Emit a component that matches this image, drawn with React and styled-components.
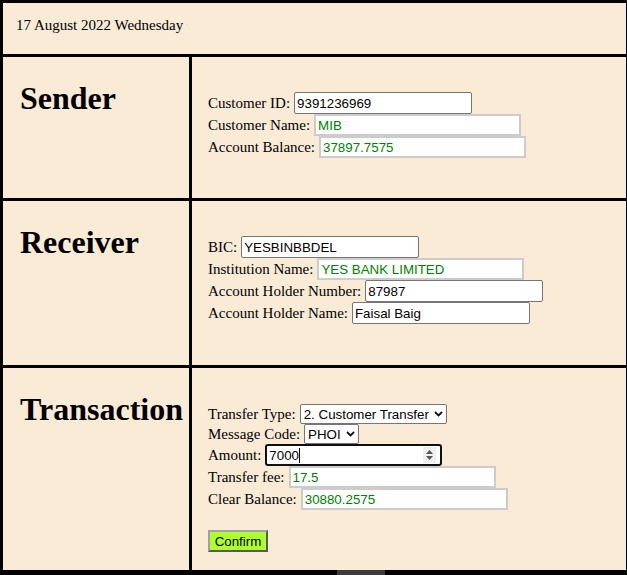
import React from "react";
import styled, { createGlobalStyle } from "styled-components";

const GlobalStyle = createGlobalStyle`
  html, body {
    margin: 0;
    padding: 0;
    background: #faebd7;
  }
  body {
    font-family: "Liberation Serif", "Times New Roman", serif;
    font-size: 15px;
    color: #000;
  }
`;

const Page = styled.div`
  width: 627px;
  background: #000;
  box-sizing: border-box;
  padding: 3px 1px 0 3px;
`;

const Grid = styled.div`
  display: grid;
  grid-template-columns: 186px 434px;
  grid-template-rows: 51px 141px 164px 202px;
  gap: 3px;
`;

const Cell = styled.div`
  background: #faebd7;
  box-sizing: border-box;
`;

const DateCell = styled(Cell)`
  grid-column: 1 / span 2;
  padding: 14px 13px;
  line-height: 17px;
`;

const TitleCell = styled(Cell)`
  padding: 23px 17px;
`;

const Title = styled.h1`
  margin: 0;
  font-size: 32px;
  font-weight: bold;
  line-height: 37px;
`;

const FormCell = styled(Cell)`
  padding: ${(p) => p.$top || 35}px 16px 0 16px;
  display: flex;
  flex-direction: column;
`;

const Line = styled.div`
  display: flex;
  align-items: center;
  gap: 4px;
  white-space: nowrap;
`;

const Label = styled.span`
  line-height: 17px;
`;

const TextBox = styled.input`
  box-sizing: border-box;
  height: 22px;
  width: ${(p) => (p.readOnly ? 207 : 178)}px;
  padding: 1px 2px;
  font-family: "Liberation Sans", Arial, sans-serif;
  font-size: 13.33px;
  background: #fff;
  color: ${(p) => (p.readOnly ? "#008000" : "#000")};
  border: ${(p) => (p.readOnly ? "2px solid #cccccc" : "1px solid #767676")};
  border-radius: ${(p) => (p.readOnly ? 0 : 2)}px;
  outline: none;
`;

const SelectBox = styled.div`
  box-sizing: border-box;
  height: 20px;
  width: ${(p) => p.$w}px;
  display: flex;
  align-items: center;
  gap: 1px;
  padding: 0 3px 0 3px;
  background: #fff;
  border: 1px solid #767676;
  border-radius: 2px;
`;

const Select = styled.select`
  appearance: none;
  flex: 1;
  min-width: 0;
  padding: 0;
  margin: 0;
  border: none;
  outline: none;
  background: transparent;
  font-family: "Liberation Sans", Arial, sans-serif;
  font-size: 13.33px;
  color: #000;
`;

const AmountBox = styled.div`
  box-sizing: border-box;
  width: 177px;
  height: 22px;
  display: flex;
  align-items: center;
  padding: 0 4px 0 2px;
  border: 2px solid #101010;
  border-radius: 3px;
  background: #fff;
  font-family: "Liberation Sans", Arial, sans-serif;
  font-size: 13.33px;
`;

const Caret = styled.span`
  width: 1px;
  height: 15px;
  background: #000;
`;

const Spacer = styled.span`
  flex: 1;
`;

const Spin = styled.span`
  display: flex;
  align-items: center;
  justify-content: center;
  width: 13px;
  height: 16px;
  background: #efefef;
`;

const Gap = styled.div`
  height: 20px;
`;

const ConfirmButton = styled.button`
  align-self: flex-start;
  box-sizing: border-box;
  width: 60px;
  height: 22px;
  padding: 0;
  background: #adff2f;
  border: 2px solid;
  border-color: #a0a0a0 #5a5a5a #5a5a5a #a0a0a0;
  font-family: "Liberation Sans", Arial, sans-serif;
  font-size: 13.33px;
  color: #000;
`;

const BottomBar = styled.div`
  height: 5px;
  display: flex;
`;

const Thumb = styled.div`
  margin-left: 334px;
  width: 48px;
  background: #3c3c3c;
`;

const Chevron = () => (
  <svg width="9" height="6" viewBox="0 0 9 6">
    <path d="M1 1 L4.5 4.5 L8 1" fill="none" stroke="#111" strokeWidth="1.8" />
  </svg>
);

const Field = ({ label, value, readOnly }) => (
  <Line>
    <Label>{label}</Label>
    <TextBox defaultValue={value} readOnly={readOnly} />
  </Line>
);

const Dropdown = ({ width, value, options }) => (
  <SelectBox $w={width}>
    <Select defaultValue={value}>
      {options.map((o) => (
        <option key={o}>{o}</option>
      ))}
    </Select>
    <Chevron />
  </SelectBox>
);

const App = () => {
  return (
    <>
      <GlobalStyle />
      <Page>
        <Grid>
          <DateCell>17 August 2022 Wednesday</DateCell>

          <TitleCell>
            <Title>Sender</Title>
          </TitleCell>
          <FormCell>
            <Field label="Customer ID:" value="9391236969" />
            <Field label="Customer Name:" value="MIB" readOnly />
            <Field label="Account Balance:" value="37897.7575" readOnly />
          </FormCell>

          <TitleCell>
            <Title>Receiver</Title>
          </TitleCell>
          <FormCell>
            <Field label="BIC:" value="YESBINBBDEL" />
            <Field label="Institution Name:" value="YES BANK LIMITED" readOnly />
            <Field label="Account Holder Number:" value="87987" />
            <Field label="Account Holder Name:" value="Faisal Baig" />
          </FormCell>

          <TitleCell>
            <Title>Transaction</Title>
          </TitleCell>
          <FormCell $top={36}>
            <Line>
              <Label>Transfer Type:</Label>
              <Dropdown
                width={147}
                value="2. Customer Transfer"
                options={["1. Bank Transfer", "2. Customer Transfer"]}
              />
            </Line>
            <Line>
              <Label>Message Code:</Label>
              <Dropdown width={55} value="PHOI" options={["PHOI", "PHOB"]} />
            </Line>
            <Line>
              <Label>Amount:</Label>
              <AmountBox>
                7000
                <Caret />
                <Spacer />
                <Spin>
                  <svg width="9" height="12" viewBox="0 0 9 12">
                    <path d="M4.5 1 L8 5 L1 5 Z" fill="#555" />
                    <path d="M4.5 11 L8 7 L1 7 Z" fill="#555" />
                  </svg>
                </Spin>
              </AmountBox>
            </Line>
            <Field label="Transfer fee:" value="17.5" readOnly />
            <Field label="Clear Balance:" value="30880.2575" readOnly />
            <Gap />
            <ConfirmButton>Confirm</ConfirmButton>
          </FormCell>
        </Grid>
        <BottomBar>
          <Thumb />
        </BottomBar>
      </Page>
    </>
  );
};

export default App;
